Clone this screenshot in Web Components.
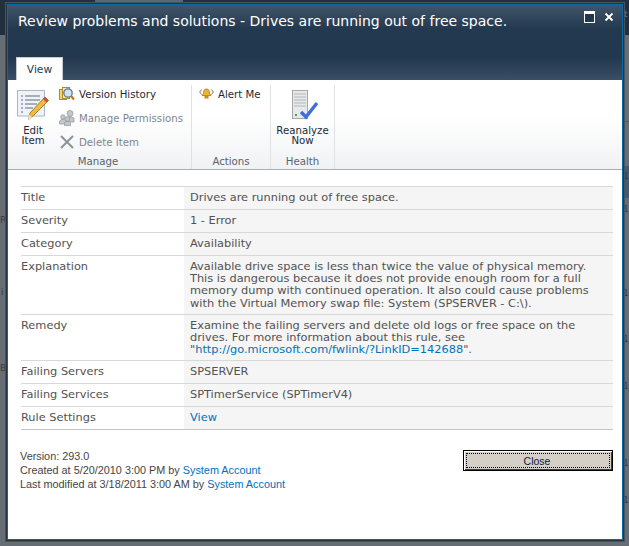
<!DOCTYPE html>
<html>
<head>
<meta charset="utf-8">
<style>
  html, body { margin: 0; height: 100%; overflow: hidden; }
  body { background: #666d75; font-family: "DejaVu Sans", Verdana, sans-serif; font-size: 11.35px; }
</style>
</head>
<body>
<sp-backdrop></sp-backdrop>
<sp-dialog>
  <sp-titlebar slot="title">Review problems and solutions - Drives are running out of free space.</sp-titlebar>
  <sp-ribbon slot="ribbon"></sp-ribbon>
  <sp-table slot="body">
    <sp-row label="Title">Drives are running out of free space.</sp-row>
    <sp-row label="Severity">1 - Error</sp-row>
    <sp-row label="Category">Availability</sp-row>
    <sp-row label="Explanation">Available drive space is less than twice the value of physical memory.<br>This is dangerous because it does not provide enough room for a full<br>memory dump with continued operation. It also could cause problems<br>with the Virtual Memory swap file: System (SPSERVER - C:\).</sp-row>
    <sp-row label="Remedy">Examine the failing servers and delete old logs or free space on the<br>drives. For more information about this rule, see<br>"<a href="#" style="color:#0072bc;text-decoration:none">http://go.microsoft.com/fwlink/?LinkID=142688</a>".</sp-row>
    <sp-row label="Failing Servers">SPSERVER</sp-row>
    <sp-row label="Failing Services">SPTimerService (SPTimerV4)</sp-row>
    <sp-row label="Rule Settings"><a href="#" style="color:#0072bc;text-decoration:none">View</a></sp-row>
  </sp-table>
  <sp-footer slot="footer"></sp-footer>
</sp-dialog>

<script>
// dimmed page that shows around the dialog
const backdropTemplate = document.createElement('template');
backdropTemplate.innerHTML = `
<style>
  :host { position: absolute; inset: 0; overflow: hidden; font-size: 9px; line-height: 12px; color: #343b44; }
  .top { position: absolute; left: 0; top: 0; width: 100%; height: 35px; background: #222f3e; }
  .patch { position: absolute; left: 95px; top: 0; width: 88px; height: 4px; background: #4f6b80; }
  .band { position: absolute; right: 0; top: 166px; width: 8px; height: 32px; background: #455a6e; }
  .line { position: absolute; right: 0; top: 121px; width: 8px; height: 1px; background: #1f6a9e; }
  span { position: absolute; }
</style>
<div class="top"></div>
<div class="patch"></div>
<div class="band"></div>
<div class="line"></div>
<span style="left:624px;top:8px;color:#6b7580">t</span>
<span style="left:623px;top:170px">1</span>
<span style="left:623px;top:203px">1</span>
<span style="left:623px;top:287px">1</span>
<span style="left:623px;top:333px">1</span>
<span style="left:623px;top:380px">1</span>
<span style="left:623px;top:457px">1</span>
<span style="left:623px;top:494px">1</span>
<span style="left:0;top:214px">R</span>
<span style="left:1px;top:286px">i</span>
<span style="left:0;top:362px">B</span>
`;
class SpBackdrop extends HTMLElement {
  constructor() {
    super();
    this.attachShadow({ mode: 'open' }).appendChild(backdropTemplate.content.cloneNode(true));
  }
}
customElements.define('sp-backdrop', SpBackdrop);

const dialogTemplate = document.createElement('template');
dialogTemplate.innerHTML = `
<style>
  :host {
    position: absolute;
    left: 7px;
    top: 4px;
    display: flex;
    flex-direction: column;
    box-sizing: border-box;
    width: 616px;
    height: 536px;
    border: 1px solid #0a6aa8;
    box-shadow: 0 0 0 1px #27333f, 0 0 0 2px #4a525b;
    background: #fff;
  }
  .body { padding: 16px 9px 0 13px; }
</style>
<slot name="title"></slot>
<slot name="ribbon"></slot>
<div class="body"><slot name="body"></slot></div>
<slot name="footer"></slot>
`;
class SpDialog extends HTMLElement {
  constructor() {
    super();
    this.attachShadow({ mode: 'open' }).appendChild(dialogTemplate.content.cloneNode(true));
  }
}
customElements.define('sp-dialog', SpDialog);

const titlebarTemplate = document.createElement('template');
titlebarTemplate.innerHTML = `
<style>
  :host {
    display: block;
    position: relative;
    height: 75px;
    background: linear-gradient(#41546a 0, #23394f 24px, #22384e 52px, #3a4e64 75px);
    color: #fff;
  }
  .text { display: block; padding: 6px 0 0 10px; font-size: 14px; line-height: 20px; white-space: nowrap; }
  .tabs { position: absolute; left: 8px; bottom: 0; }
  .tab {
    box-sizing: border-box;
    height: 23px;
    width: 47px;
    background: #fff;
    color: #23394f;
    border: 1px solid #c5cad0;
    border-bottom: 0;
    text-align: center;
    font-size: 10.7px;
    line-height: 24px;
  }
  .ctrls { position: absolute; top: 6px; right: 8px; display: flex; gap: 9px; }
  svg { display: block; }
</style>
<span class="text"><slot></slot></span>
<div class="ctrls">
  <svg width="11" height="12" viewBox="0 0 11 12">
    <rect x=".5" y=".5" width="10" height="11" fill="#22384e" stroke="#fff"/>
    <rect x="1" y="1" width="9" height="2" fill="#fff"/>
  </svg>
  <svg width="10" height="12" viewBox="0 0 10 12">
    <path d="M1.500 2.500l7 7M8.500 2.500l-7 7" stroke="#2a3644" stroke-width="3.400"/>
    <path d="M1.500 2.500l7 7M8.500 2.500l-7 7" stroke="#fff" stroke-width="2"/>
  </svg>
</div>
<div class="tabs"><div class="tab">View</div></div>
`;
class SpTitlebar extends HTMLElement {
  constructor() {
    super();
    this.attachShadow({ mode: 'open' }).appendChild(titlebarTemplate.content.cloneNode(true));
  }
}
customElements.define('sp-titlebar', SpTitlebar);

const ribbonTemplate = document.createElement('template');
ribbonTemplate.innerHTML = `
<style>
  :host {
    display: flex;
    box-sizing: border-box;
    height: 90px;
    padding-top: 2px;
    background: linear-gradient(#fff 40%, #f1f2f4);
    border-bottom: 1px solid #a9acb0;
    font-size: 10.2px;
    color: #2b3a4a;
  }
  .group {
    display: flex;
    flex-direction: column;
    box-sizing: border-box;
    margin-top: 3px;
    border-right: 1px solid #dfe2e5;
  }
  .items { flex: 1; display: flex; margin-top: -3px; }
  .label { height: 15px; line-height: 16px; text-align: center; color: #57636f; }
  .large { display: flex; flex-direction: column; align-items: center; line-height: 10px; text-align: center; color: #1d2a38; padding-top: 7px; }
  .large svg { margin-bottom: 5px; }
  .small { display: flex; align-items: center; height: 24px; gap: 4px; white-space: nowrap; color: #1d2a38; }
  .off { color: #7d868e; }
  svg { display: block; flex: none; }
</style>
<div class="group" style="width:184px">
  <div class="items">
    <div class="large" style="width:50px">
      <svg width="32" height="32" viewBox="0 0 32 32">
        <path d="M.5 1.500h27v25.500h-27z" fill="#eff3f8" stroke="#a8b6c8"/>
        <path d="M4 7h2M8 7h15M4 11h2M8 11h15M4 15h2M8 15h12M4 19h2M8 19h8M4 23h2" stroke="#5c6b7d"/>
        <path d="M28 8l3.500 3.500-15 15-5 4 1.500-6.500z" fill="#f2bb3c" stroke="#85661c" stroke-width=".8"/>
        <path d="M28 8l3.500 3.500-2 2-3.500-3.500z" fill="#c94f40"/>
        <path d="M11 31l1.200-5.500 3.500 3.500z" fill="#f3dcb8"/>
      </svg>
      <span>Edit<br>Item</span>
    </div>
    <div style="margin-left:1px">
      <div class="small">
        <svg width="16" height="16" viewBox="0 0 16 16">
          <rect x=".5" y="3.500" width="7" height="10" fill="#f2d27a" stroke="#b08a2e"/>
          <rect x="3.500" y="1.500" width="7" height="11" fill="#fbeeb8" stroke="#b08a2e"/>
          <circle cx="9" cy="7" r="4.200" fill="#cfe3f5" stroke="#5f7890" stroke-width="1.300"/>
          <path d="M12 10l3 3.500" stroke="#c4721e" stroke-width="2.200"/>
        </svg>
        <span>Version History</span>
      </div>
      <div class="small off">
        <svg width="16" height="16" viewBox="0 0 16 16" fill="#c3c7cb" stroke="#8f969c" stroke-width=".7">
          <circle cx="4" cy="7" r="2.300"/>
          <path d="M.5 14v-3l2-1.500h3l1.500 1.500v3z"/>
          <circle cx="11" cy="3.500" r="3"/>
          <path d="M7.500 12v-4l2-1h3l2.500 1v4z"/>
          <circle cx="8.500" cy="9" r="2.300"/>
          <path d="M5.500 15.500v-2.500l1.500-1.500h3l1.500 1.500v2.500z"/>
        </svg>
        <span>Manage Permissions</span>
      </div>
      <div class="small off">
        <svg width="16" height="16" viewBox="0 0 16 16"><path d="M2 2l12 12M14 2l-12 12" stroke="#8e9398" stroke-width="2"/></svg>
        <span>Delete Item</span>
      </div>
    </div>
  </div>
  <div class="label" style="padding-right:3px">Manage</div>
</div>
<div class="group" style="width:79px">
  <div class="items" style="padding-left:7px">
    <div class="small" style="align-self:flex-start">
      <svg width="15" height="16" viewBox="0 0 15 16">
        <path d="M7.500 3c-2.500 0-3 1.800-3 4.500l-1.500 2h9l-1.500-2c0-2.700-.5-4.500-3-4.500z" fill="#f0b52e" stroke="#9a6f14" stroke-width=".7"/>
        <rect x="5.500" y="10" width="4" height="2.500" fill="#c98a1e"/>
        <path d="M2.500 3.500l-1.800 2.500 1.800 2.500M12.500 3.500l1.800 2.500-1.800 2.500" fill="none" stroke="#8a7a5a"/>
      </svg>
      <span>Alert Me</span>
    </div>
  </div>
  <div class="label">Actions</div>
</div>
<div class="group" style="width:64px">
  <div class="items" style="justify-content:center">
    <div class="large">
      <svg width="32" height="32" viewBox="0 0 32 32">
        <rect x="5.500" y="1.500" width="15" height="28" fill="#e6e8ea" stroke="#a4a8ac"/>
        <path d="M7 5h12M7 8h12M7 11h12M7 14h12M7 17h12" stroke="#b4b8bc"/>
        <rect x="8" y="25" width="2" height="2" fill="#3fae49"/>
        <path d="M14 23l5 5 11-14" fill="none" stroke="#3f6fdc" stroke-width="3.400"/>
      </svg>
      <span>Reanalyze<br>Now</span>
    </div>
  </div>
  <div class="label">Health</div>
</div>
`;
class SpRibbon extends HTMLElement {
  constructor() {
    super();
    this.attachShadow({ mode: 'open' }).appendChild(ribbonTemplate.content.cloneNode(true));
  }
}
customElements.define('sp-ribbon', SpRibbon);

const tableTemplate = document.createElement('template');
tableTemplate.innerHTML = `
<style>
  :host { display: block; border-top: 1px solid #d8d8d8; border-bottom: 1px solid #c4c4c4; color: #525252; }
</style>
<slot></slot>
`;
class SpTable extends HTMLElement {
  constructor() {
    super();
    this.attachShadow({ mode: 'open' }).appendChild(tableTemplate.content.cloneNode(true));
  }
}
customElements.define('sp-table', SpTable);

const rowTemplate = document.createElement('template');
rowTemplate.innerHTML = `
<style>
  :host { display: grid; grid-template-columns: 163px 1fr; border-top: 1px solid #d8d8d8; }
  :host(:first-child) { border-top: 0; }
  .k, .v { padding: 4px 0 5px; line-height: 12.2px; min-height: 13px; }
  .v { padding: 4px 6px 5px; background: #f5f5f5; white-space: nowrap; }
</style>
<div class="k"></div>
<div class="v"><slot></slot></div>
`;
class SpRow extends HTMLElement {
  constructor() {
    super();
    this.attachShadow({ mode: 'open' }).appendChild(rowTemplate.content.cloneNode(true));
    this.shadowRoot.querySelector('.k').textContent = this.getAttribute('label');
  }
}
customElements.define('sp-row', SpRow);

const footerTemplate = document.createElement('template');
footerTemplate.innerHTML = `
<style>
  :host { display: flex; justify-content: space-between; align-items: flex-start; padding: 19px 9px 0 12px; font-family: "Liberation Sans", sans-serif; font-size: 10.85px; line-height: 14px; color: #444; }
  a { color: #0072bc; text-decoration: none; }
  button {
    box-sizing: border-box;
    width: 150px;
    height: 21px;
    margin-top: 1px;
    padding: 0 2px 0 0;
    background: #d4d0c8;
    border: 1px solid #000;
    box-shadow: inset 1px 1px 0 #fff, inset -1px -1px 0 #404040;
    outline: 1px dotted #000;
    outline-offset: -4px;
    font: 10.5px "Liberation Sans", sans-serif;
    color: #0b1a3a;
  }
</style>
<div>
  <div>Version: 293.0</div>
  <div>Created at 5/20/2010 3:00 PM by <a href="#">System Account</a></div>
  <div>Last modified at 3/18/2011 3:00 AM by <a href="#">System Account</a></div>
</div>
<button>Close</button>
`;
class SpFooter extends HTMLElement {
  constructor() {
    super();
    this.attachShadow({ mode: 'open' }).appendChild(footerTemplate.content.cloneNode(true));
  }
}
customElements.define('sp-footer', SpFooter);
</script>
</body>
</html>
